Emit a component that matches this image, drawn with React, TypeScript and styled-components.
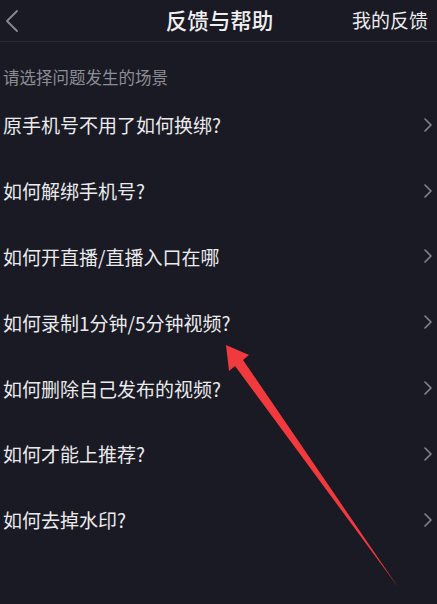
import React from "react";
import styled, { createGlobalStyle } from "styled-components";

const Global = createGlobalStyle`
  html, body { margin: 0; padding: 0; background: #1a1a24; }
  body { font-family: "Noto Sans CJK SC", "Noto Sans", sans-serif; }
`;

const Page = styled.div`
  position: relative;
  width: 437px;
  height: 604px;
  background: #1a1a24;
  overflow: hidden;
  color: #e8e8ea;
`;

const Header = styled.div`
  height: 41px;
  display: grid;
  grid-template-columns: 100px 1fr 100px;
  align-items: center;
  border-bottom: 1px solid #2a2a34;
`;

const Back = styled.div`
  display: flex;
  align-items: center;
  padding-left: 5px;
  height: 100%;
`;

const Title = styled.div`
  text-align: center;
  font-size: 21.5px;
  font-weight: 500;
  color: #f0f0f2;
  line-height: 30px;
  margin-top: -2px;
  padding-left: 2px;
`;

const Action = styled.div`
  text-align: right;
  font-size: 19px;
  color: #ececee;
  padding-right: 9px;
  white-space: nowrap;
  line-height: 30px;
  margin-top: -2px;
`;

const Hint = styled.div`
  padding: 24px 0 4px 3px;
  font-size: 16.5px;
  line-height: 22px;
  color: #8d8d95;
`;

const List = styled.div`
  display: flex;
  flex-direction: column;
`;

const Item = styled.div`
  height: 65.8px;
  display: flex;
  align-items: center;
  justify-content: space-between;
  padding: 0 5px 0 3px;
`;

const ItemText = styled.span`
  font-size: 19px;
  color: #ebebed;
`;

const Arrow = styled.svg`
  position: absolute;
  left: 0;
  top: 0;
  pointer-events: none;
`;

const Chevron = () => (
  <svg width="8" height="14" viewBox="0 0 8 14">
    <path d="M1 1 L7 7 L1 13" fill="none" stroke="#85858d" strokeWidth="1.6" strokeLinecap="round" strokeLinejoin="round" />
  </svg>
);

const items = [
  "原手机号不用了如何换绑?",
  "如何解绑手机号?",
  "如何开直播/直播入口在哪",
  "如何录制1分钟/5分钟视频?",
  "如何删除自己发布的视频?",
  "如何才能上推荐?",
  "如何去掉水印?",
];

export default function App() {
  return (
    <Page>
      <Global />
      <Header>
        <Back>
          <svg width="14" height="24" viewBox="0 0 14 24">
            <path d="M12 2 L2 12 L12 22" fill="none" stroke="#8a8a92" strokeWidth="1.8" strokeLinecap="round" strokeLinejoin="round" />
          </svg>
        </Back>
        <Title>反馈与帮助</Title>
        <Action>我的反馈</Action>
      </Header>
      <Hint>请选择问题发生的场景</Hint>
      <List>
        {items.map((t) => (
          <Item key={t}>
            <ItemText>{t}</ItemText>
            <Chevron />
          </Item>
        ))}
      </List>
      <Arrow width="437" height="604" viewBox="0 0 437 604">
        <polygon
          points="226,345 249,355 243,360 398,587 235,366 229,371"
          fill="#f03a3e"
        />
      </Arrow>
    </Page>
  );
}
